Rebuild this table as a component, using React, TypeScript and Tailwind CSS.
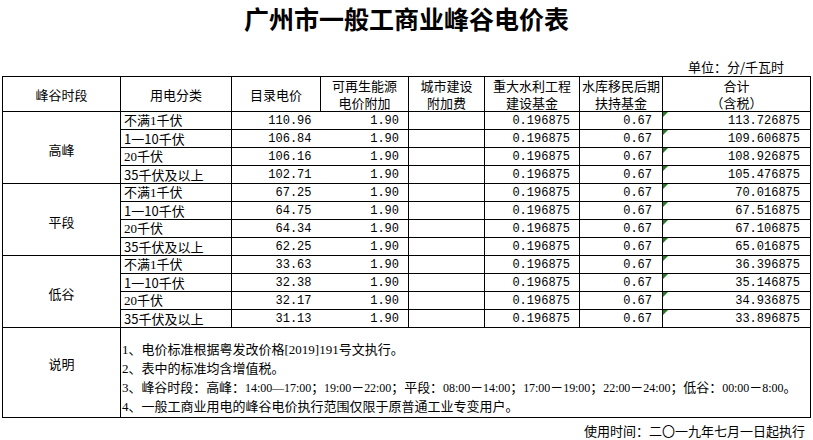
import React from 'react';

type Row = { cat: React.ReactNode; price: string; total: string };
type Group = { name: string; rows: Row[] };

const serif = "font-['Liberation_Serif',serif]";
const serifS = "font-['Liberation_Serif',serif] text-[12px]";

const cats = (): React.ReactNode[] => [
  <span key="a">不满<span className={serif}>1</span>千伏</span>,
  <span key="b">1一10千伏</span>,
  <span key="c"><span className={serif}>20</span>千伏</span>,
  <span key="d">35千伏及以上</span>,
];

const data: { name: string; prices: string[]; totals: string[] }[] = [
  { name: '高峰', prices: ['110.96', '106.84', '106.16', '102.71'], totals: ['113.726875', '109.606875', '108.926875', '105.476875'] },
  { name: '平段', prices: ['67.25', '64.75', '64.34', '62.25'], totals: ['70.016875', '67.516875', '67.106875', '65.016875'] },
  { name: '低谷', prices: ['33.63', '32.38', '32.17', '31.13'], totals: ['36.396875', '35.146875', '34.936875', '33.896875'] },
];

const groups: Group[] = data.map((d) => {
  const c = cats();
  return { name: d.name, rows: d.prices.map((p, i) => ({ cat: c[i], price: p, total: d.totals[i] })) };
});

const mono = "font-['Liberation_Mono',monospace] text-[12px]";
const td = 'border border-black p-0 align-bottom leading-[16px]';

export default function App() {
  return (
    <div className="w-[813px] h-[440px] bg-white text-black overflow-hidden font-['Noto_Sans_CJK_SC',sans-serif] text-[13px] flex flex-col">
      <div className="pt-[3px] h-[59px] text-center text-[25px] leading-[30px] font-bold">广州市一般工商业峰谷电价表</div>
      <div className="h-[17px] leading-[16px] text-right pr-[29px]">单位：分/千瓦时</div>
      <table className="ml-[2px] w-[808px] table-fixed border-collapse">
        <colgroup>
          <col className="w-[118px]" />
          <col className="w-[111px]" />
          <col className="w-[89px]" />
          <col className="w-[88px]" />
          <col className="w-[76px]" />
          <col className="w-[95px]" />
          <col className="w-[83px]" />
          <col className="w-[148px]" />
        </colgroup>
        <tbody>
          <tr className="h-[35px] text-center leading-[17px]">
            <td className="border border-black p-0 align-middle">峰谷时段</td>
            <td className="border border-black p-0 align-middle">用电分类</td>
            <td className="border border-black p-0 align-middle">目录电价</td>
            <td className="border border-black p-0 align-middle">可再生能源<br />电价附加</td>
            <td className="border border-black p-0 align-middle">城市建设<br />附加费</td>
            <td className="border border-black p-0 align-middle">重大水利工程<br />建设基金</td>
            <td className="border border-black p-0 align-middle">水库移民后期<br />扶持基金</td>
            <td className="border border-black p-0 align-middle">合计<br />（含税）</td>
          </tr>
          {groups.map((g) =>
            g.rows.map((r, i) => (
              <tr key={g.name + i} className="h-[18px]">
                {i === 0 && (
                  <td rowSpan={4} className="border border-black p-0 align-middle text-center pt-[4px]">
                    {g.name}
                  </td>
                )}
                <td className={`${td} pl-[3px] whitespace-nowrap`}>{r.cat}</td>
                <td className={`${td} border-r-0 text-right pr-[9px] ${mono}`}>{r.price}</td>
                <td className={`${td} border-l-0 text-right pr-[9px] ${mono}`}>1.90</td>
                <td className={td}></td>
                <td className={`${td} text-right pr-[9px] ${mono}`}>0.196875</td>
                <td className={`${td} text-right pr-[10px] ${mono}`}>0.67</td>
                <td className={`${td} relative text-right pr-[10px] ${mono}`}>
                  <span className="absolute left-0 top-0 w-0 h-0 border-t-[5px] border-t-[#1e7b1e] border-r-[5px] border-r-transparent" />
                  {r.total}
                </td>
              </tr>
            ))
          )}
          <tr className="h-[90px]">
            <td className="border border-black p-0 align-middle text-center pb-[18px]">说明</td>
            <td colSpan={7} className="border border-black p-0 pl-[1px] pb-[1px] align-bottom leading-[18px] whitespace-nowrap">
              <div><span className={serif}>1</span>、电价标准根据粤发改价格<span className={serif}>[2019]191</span>号文执行。</div>
              <div><span className={serif}>2</span>、表中的标准均含增值税。</div>
              <div className="tracking-[-0.05px]">
                <span className={serif}>3</span>、峰谷时段：高峰：<span className={serifS}>14:00—17:00</span>；<span className={serifS}>19:00</span>－<span className={serifS}>22:00</span>；平段：<span className={serifS}>08:00</span>－<span className={serifS}>14:00</span>；<span className={serifS}>17:00</span>－<span className={serifS}>19:00</span>；<span className={serifS}>22:00</span>－<span className={serifS}>24:00</span>；低谷：<span className={serifS}>00:00</span>－<span className={serifS}>8:00</span>。
              </div>
              <div><span className={serif}>4</span>、一般工商业用电的峰谷电价执行范围仅限于原普通工业专变用户。</div>
            </td>
          </tr>
        </tbody>
      </table>
      <div className="mt-[4px] text-right pr-[8px] leading-[18px]">使用时间：二〇一九年七月一日起执行</div>
    </div>
  );
}
